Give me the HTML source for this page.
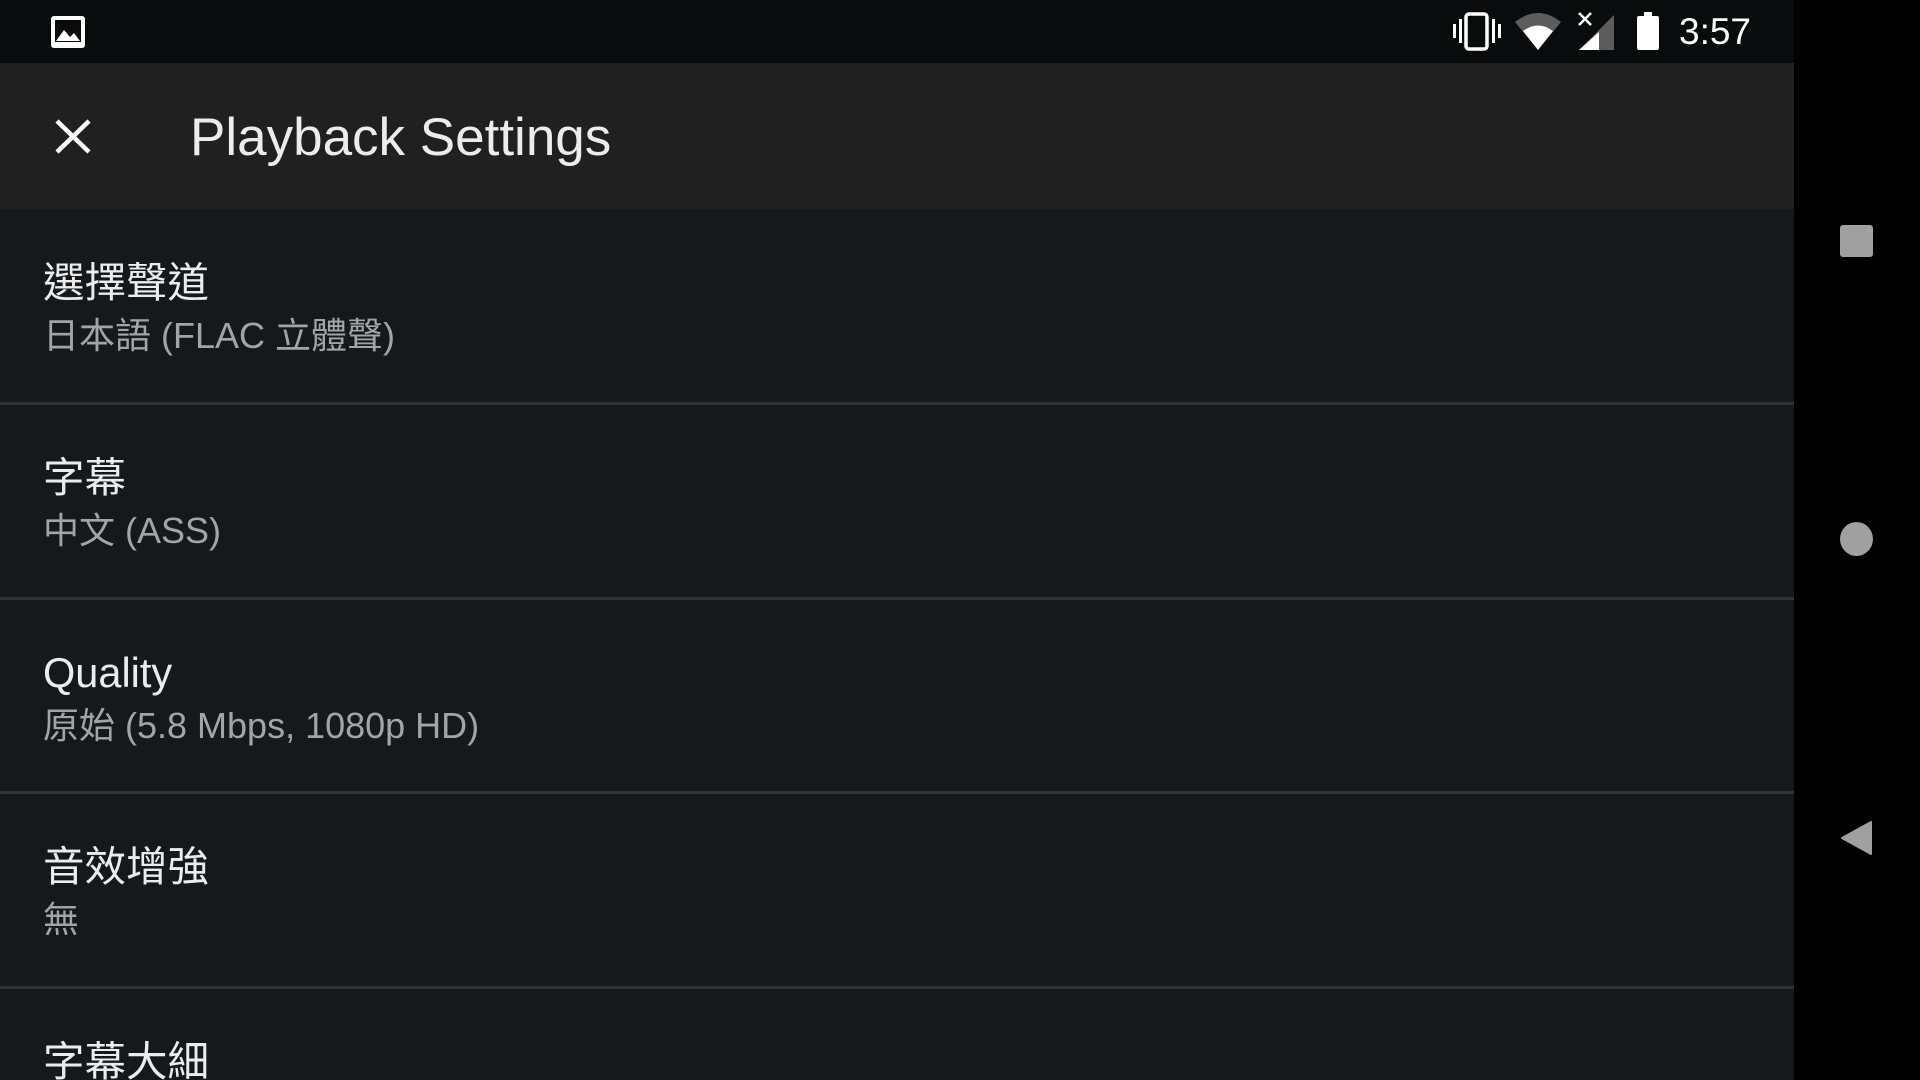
<!DOCTYPE html>
<html><head><meta charset="utf-8"><style>
*{margin:0;padding:0;box-sizing:border-box}
html,body{width:1920px;height:1080px;overflow:hidden}
body{background:#000;position:relative;font-family:"Liberation Sans","Noto Sans CJK TC",sans-serif}
#sb{position:absolute;left:0;top:0;width:1794px;height:63px;background:#0a0b0c}
#tb{position:absolute;left:0;top:63px;width:1794px;height:146px;background:#202020}
#ct{position:absolute;left:0;top:209px;width:1794px;height:871px;background:#16191c;overflow:hidden}
.row{position:absolute;left:0;width:1794px;height:190px;overflow:hidden}
.div{position:absolute;left:0;width:1794px;height:3px;background:#303336}
.t{position:absolute;left:43px;color:#ececec;font-size:41.5px;white-space:nowrap}
.s{position:absolute;left:43px;color:#a4a4a4;font-size:36px;white-space:nowrap}
#nav div{position:absolute;background:#a0a0a0}
</style></head><body>
<div id="sb">
<svg style="position:absolute;left:50px;top:15px" width="36" height="34" viewBox="0 0 36 34"><rect x="1" y="1" width="34" height="32" rx="3" fill="#fff"/><rect x="5" y="5" width="26" height="22" fill="#0a0b0c"/><path d="M6 26 L14 15 L20 22 L24 18 L30 26 Z" fill="#fff"/></svg>
<svg style="position:absolute;left:1453px;top:12px" width="48" height="40" viewBox="0 0 48 40"><rect x="0" y="12" width="3" height="14" fill="#fff"/><rect x="6" y="7" width="3" height="24" fill="#fff"/><rect x="13" y="2" width="21" height="35" rx="3" fill="none" stroke="#fff" stroke-width="3.5"/><rect x="39" y="7" width="3" height="24" fill="#fff"/><rect x="45" y="12" width="3" height="14" fill="#fff"/></svg>
<svg style="position:absolute;left:1515px;top:12px" width="46" height="38" viewBox="0 0 46 38"><path d="M0 10 Q23 -8 46 10 L23 38 Z" fill="#5c5c5c"/><path d="M8 19 Q23 8 38 19 L23 38 Z" fill="#fff"/></svg>
<svg style="position:absolute;left:1578px;top:12px" width="38" height="40" viewBox="0 0 38 40"><path d="M36 3 L36 38 L1 38 Z" fill="#5c5c5c"/><path d="M21 20 L21 38 L1 38 Z" fill="#fff"/><path d="M1 1 L13 13 M13 1 L1 13" stroke="#fff" stroke-width="2.5"/></svg>
<svg style="position:absolute;left:1637px;top:12px" width="22" height="38" viewBox="0 0 22 38"><rect x="7" y="0" width="8" height="5" fill="#fff"/><rect x="0" y="4" width="22" height="34" rx="2" fill="#fff"/></svg>
<div style="position:absolute;left:1679px;top:12px;color:#fff;font-size:37px;line-height:40px">3:57</div>
</div>
<div id="tb">
<svg style="position:absolute;left:55px;top:56px" width="36" height="35" viewBox="0 0 36 35"><path d="M2 2 L34 33 M34 2 L2 33" stroke="#fff" stroke-width="4.5"/></svg>
<div style="position:absolute;left:190px;top:45px;color:#ececec;font-size:53px;line-height:60px;white-space:nowrap">Playback Settings</div>
</div>
<div id="ct">
<div class="row" style="top:0"><div class="t" style="top:51px;line-height:46px">選擇聲道</div><div class="s" style="top:106px;line-height:42px">日本語 (FLAC 立體聲)</div></div>
<div class="div" style="top:193px"></div>
<div class="row" style="top:195px"><div class="t" style="top:51px;line-height:46px">字幕</div><div class="s" style="top:106px;line-height:42px">中文 (ASS)</div></div>
<div class="div" style="top:388px"></div>
<div class="row" style="top:390px"><div class="t" style="top:51px;line-height:46px">Quality</div><div class="s" style="top:106px;line-height:42px">原始 (5.8 Mbps, 1080p HD)</div></div>
<div class="div" style="top:582px"></div>
<div class="row" style="top:584px"><div class="t" style="top:51px;line-height:46px">音效增強</div><div class="s" style="top:106px;line-height:42px">無</div></div>
<div class="div" style="top:777px"></div>
<div class="row" style="top:779px;height:92px"><div class="t" style="top:51px;line-height:46px">字幕大細</div></div>
</div>
<div id="nav">
<div style="left:1840px;top:225px;width:33px;height:32px;border-radius:3px"></div>
<div style="left:1840px;top:522px;width:33px;height:34px;border-radius:50%"></div>
<svg style="position:absolute;left:1840px;top:820px" width="33" height="36" viewBox="0 0 33 36"><path d="M2 18 L31 2 L31 34 Z" fill="#a0a0a0" stroke="#a0a0a0" stroke-linejoin="round" stroke-width="2"/></svg>
</div>
</body></html>
